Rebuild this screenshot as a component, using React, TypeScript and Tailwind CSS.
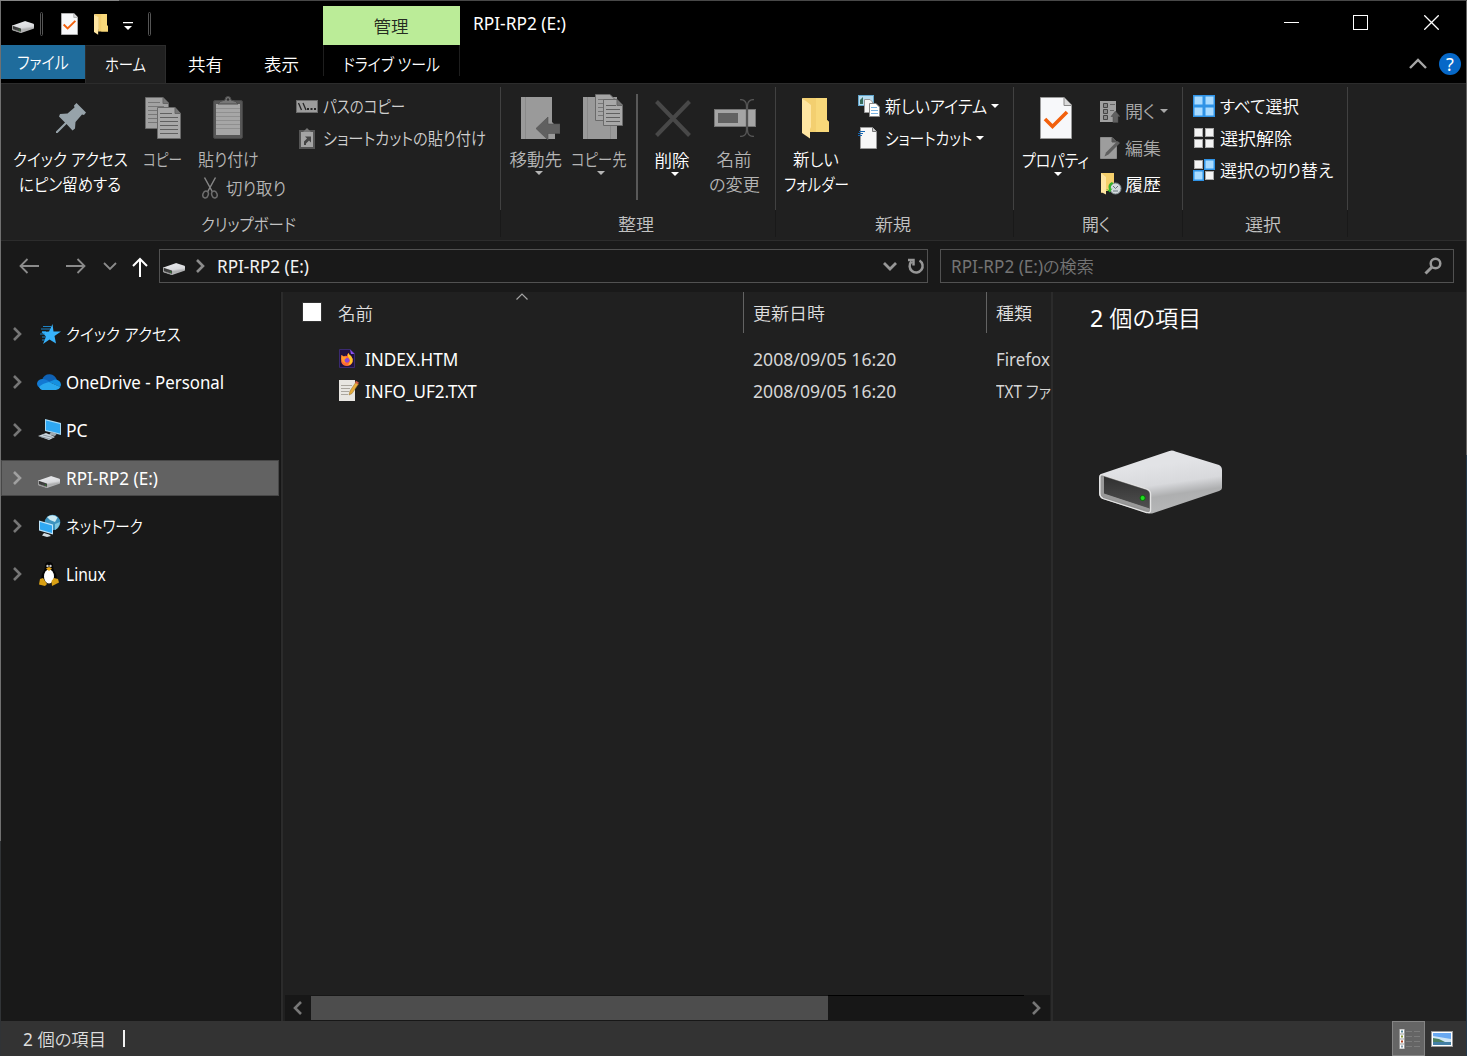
import React, { useLayoutEffect, useRef, useState } from "react";

/** One line of text, squeezed or stretched horizontally to a given width. */
function Fit({ w, children, className = "" }: { w: number; children: string; className?: string }) {
  const ref = useRef<HTMLSpanElement>(null);
  const [scale, setScale] = useState(1);
  useLayoutEffect(() => {
    if (ref.current) setScale(w / ref.current.offsetWidth);
  }, [w, children]);
  return (
    <span className={"block h-6 shrink-0 whitespace-nowrap leading-6 " + className} style={{ width: w }}>
      <span ref={ref} className="inline-block origin-left" style={{ transform: `scaleX(${scale})` }}>
        {children}
      </span>
    </span>
  );
}

function Drive({ id, className }: { id: string; className: string }) {
  return (
    <svg viewBox="0 0 124 64" className={"shrink-0 " + className} preserveAspectRatio="none">
      <defs>
        <linearGradient id={id} x1="0.4" y1="0.25" x2="0.58" y2="0.9">
          <stop offset="0" stopColor="#e2e3e6" />
          <stop offset="0.45" stopColor="#d8d9dc" />
          <stop offset="0.72" stopColor="#aeafb0" />
          <stop offset="1" stopColor="#b4b5b6" />
        </linearGradient>
        <linearGradient id={id + "f"} x1="0" y1="0" x2="0" y2="1">
          <stop offset="0" stopColor="#303030" />
          <stop offset="1" stopColor="#505050" />
        </linearGradient>
      </defs>
      <path d="M2 24 L71 1 Q74 0 77 1.500 L121 15 Q124 16.500 124 20 V38 Q124 40 121 41 L55 63 Q52 64 49 63 L4 49 Q0 47 0 43 V28 Q0 25 2 24Z" fill={"url(#" + id + ")"} />
      <path d="M1 27 Q1 24 4 25 L48 39 Q52 40.500 52 44 V60 Q52 63.500 48 62.500 L4 48.500 Q1 47 1 44Z" fill="#929292" stroke="#e4e4e4" strokeWidth="1.300" />
      <path d="M5 26.500 L48 40 Q51 41.500 51 44 V59 L5 44Z" fill={"url(#" + id + "f)"} />
      <path d="M2 28L5 27V43.500L51 58.500V61L4 47Q2 46 2 44Z" fill="#999" />
      <circle cx="44" cy="48" r="2.600" fill="#1fe01f" stroke="#0a6a0a" strokeWidth="1" />
    </svg>
  );
}

function CheckDoc({ className }: { className: string }) {
  return (
    <svg viewBox="0 0 32 42" className={"shrink-0 " + className} preserveAspectRatio="none">
      <path d="M0.500 0.500H24L31.500 8V41.500H0.500Z" fill="#f7f8fa" stroke="#9a9a9a" />
      <path d="M24 0.500V8.500H31.500" fill="#dadada" stroke="#888" />
      <path d="M5 22L12.500 29.500L27 15" fill="none" stroke="#f2600c" strokeWidth="3.600" />
    </svg>
  );
}

function Folder({ className }: { className: string }) {
  return (
    <svg viewBox="0 0 27 41" className={"shrink-0 " + className} preserveAspectRatio="none">
      <path d="M0 0H25V22L27 24V34H8V8Z" fill="#f3cf70" />
      <path d="M14 0H25V22L27 24V34H14Z" fill="#f8d87a" />
      <path d="M0 0L9 7V29L8 31V40.500L0 35Z" fill="#ffe6a2" />
    </svg>
  );
}

function PagePair({ className }: { className: string }) {
  return (
    <svg viewBox="0 0 36 42" className={"shrink-0 " + className}>
      <path d="M.5.5H18L23.500 6V31.500H.5Z" fill="#a2a2a2" stroke="#6a6a6a" />
      <path d="M18 .5V6.500H24" fill="#777" stroke="#666" />
      <path d="M3 5.500h12M3 9.500h16M3 13.500h10M3 17.500h9M3 21.500h9M3 25.500h9" stroke="#777" />
      <path d="M12.500 10.500H30L35.500 16.500V41.500H12.500Z" fill="#a8a8a8" stroke="#6a6a6a" />
      <path d="M30 10.500V16.500H36" fill="#777" stroke="#666" />
      <path d="M15 16.500h12M15 20.500h18M15 24.500h18M15 28.500h18M15 32.500h18M15 36.500h18" stroke="#606060" />
    </svg>
  );
}

function Caret({ className = "" }: { className?: string }) {
  return (
    <svg viewBox="0 0 8 4" className={"h-1 w-2 shrink-0 " + className}>
      <path d="M0 0H8L4 4Z" fill="currentColor" />
    </svg>
  );
}

function Clipboard({ className }: { className: string }) {
  return (
    <svg viewBox="0 0 30 43" className={"shrink-0 " + className}>
      <rect x="0.500" y="4.500" width="29" height="38" rx="1.500" fill="#565656" stroke="#444" />
      <rect x="3" y="8" width="24" height="31" fill="#a6a6a6" />
      <path d="M3 12.500h24M3 16.500h24M3 20.500h24M3 24.500h24M3 28.500h24M3 32.500h24" stroke="#8f8f8f" />
      <path d="M5 8Q6 5 12 4Q12 .5 15 .5T18 4Q24 5 25 8Z" fill="#777" stroke="#4c4c4c" />
      <circle cx="15" cy="3.500" r="1.300" fill="#333" />
    </svg>
  );
}

function Scissors() {
  return (
    <svg viewBox="0 0 16 22" className="h-[22px] w-4 shrink-0" fill="none" stroke="#6e6e6e" strokeWidth="1.500">
      <path d="M2.500 .5L10.500 15M13.500 .5L5.500 15" stroke="#858585" />
      <ellipse cx="3.600" cy="17.500" rx="2.600" ry="3.500" transform="rotate(20 3.600 17.500)" />
      <ellipse cx="12.400" cy="17.500" rx="2.600" ry="3.500" transform="rotate(-20 12.400 17.500)" />
    </svg>
  );
}

function Squares({ on }: { on: boolean[] }) {
  const at = [[1, 1], [12, 1], [1, 12], [12, 12]];
  return (
    <svg viewBox="0 0 22 22" className="size-[22px] shrink-0">
      {at.map(([x, y], i) =>
        on[i] ? (
          <rect key={i} x={x - 0.25} y={y - 0.25} width="9.500" height="9.500" fill="#a9dbff" stroke="#2f93e6" strokeWidth="1.500" />
        ) : (
          <rect key={i} x={x + 0.5} y={y + 0.5} width="8" height="8" fill="#f4f4f4" stroke="#aaa" />
        )
      )}
    </svg>
  );
}

function Chevron({ className = "" }: { className?: string }) {
  return (
    <svg viewBox="0 0 9 14" className={"h-[14px] w-[9px] shrink-0 " + className} fill="none" stroke="currentColor" strokeWidth="2.600">
      <path d="M1 1L7 7L1 13" />
    </svg>
  );
}

function Group({ label, labelWidth, className, children }: { label: string; labelWidth: number; className: string; children: React.ReactNode }) {
  return (
    <section className={"flex h-[156px] shrink-0 flex-col " + className}>
      <div className="flex flex-1">
        <div className="flex min-w-0 flex-1 flex-col">
          <div className="flex h-32 items-start">{children}</div>
          <div className="flex justify-center pr-1 text-[#c2c2c2]">
            <Fit w={labelWidth}>{label}</Fit>
          </div>
        </div>
        <div className="flex w-px flex-col pt-[3px]">
          <div className="h-[123px] bg-[#414141]" />
          <div className="h-[27px] bg-[#191919]" />
        </div>
      </div>
    </section>
  );
}

function TitleBar() {
  return (
    <header className="flex h-11 items-start bg-black">
      <Drive id="d1" className="ml-[11px] mt-5 h-3 w-[22px]" />
      <div className="ml-[6px] mt-[11px] h-6 w-[3px] rounded border border-[#555]" />
      <CheckDoc className="ml-[18px] mt-3 h-[22px] w-[17px]" />
      <Folder className="ml-4 mt-[13px] h-[21px] w-[14px]" />
      <svg viewBox="0 0 10 9" className="ml-[15px] mt-[21px] h-[9px] w-[10px] text-white">
        <path d="M0 0H10V1.200H0ZM1 4H9L5 8Z" fill="currentColor" />
      </svg>
      <div className="ml-[15px] mt-[11px] h-6 w-[3px] rounded border border-[#555]" />
      <div className="ml-[172px] mt-[5px] flex h-[39px] w-[137px] justify-center bg-[#bbec98] pr-px pt-2 text-[#252b21]">
        <Fit w={35}>管理</Fit>
      </div>
      <Fit w={93} className="ml-[13px] mt-[10px] text-white">RPI-RP2 (E:)</Fit>
      <div className="ml-auto mr-[27px] flex items-center gap-[54px] pt-[14px]">
        <div className="h-px w-[15px] bg-white" />
        <div className="size-[15px] border border-white" />
        <svg viewBox="0 0 15 15" className="ml-[2px] size-[15px]" stroke="#fff" strokeWidth="1.300">
          <path d="M.3.3L14.700 14.700M14.700.3L.3 14.700" />
        </svg>
      </div>
    </header>
  );
}

function Tabs() {
  return (
    <nav className="flex h-[38px] items-start bg-black text-white">
      <div className="flex h-[34px] w-[84px] justify-center bg-[#1f6c9c] pt-[5px]">
        <Fit w={52}>ファイル</Fit>
      </div>
      <div className="flex h-[39px] w-[81px] justify-center border-x border-t border-[#2c2c2c] bg-[#202020] pt-[6px]">
        <Fit w={41}>ホーム</Fit>
      </div>
      <Fit w={35} className="ml-[22px] mt-[7px]">共有</Fit>
      <Fit w={35} className="ml-[41px] mt-[7px]">表示</Fit>
      <div className="ml-[24px] flex h-[31px] w-[137px] justify-center border-x border-[#1e1e1e] pt-[7px]">
        <Fit w={97}>ドライブ ツール</Fit>
      </div>
      <svg viewBox="0 0 18 11" className="ml-auto mt-[13px] h-[11px] w-[18px]" fill="none" stroke="#a6a6a6" strokeWidth="2.400">
        <path d="M1 10L9 2L17 10" />
      </svg>
      <div className="ml-[12px] mr-[5px] mt-2 flex size-[22px] items-center justify-center rounded-full bg-[#0668c8] text-[18px] leading-none text-white">?</div>
    </nav>
  );
}

function Ribbon() {
  return (
    <div className="flex h-[158px] border-y border-[#2c2c2c] bg-[#202020] text-[#b5b5b5]">
      <Group label="クリップボード" labelWidth={95} className="w-[500px]">
        <div className="ml-[11px] flex w-[117px] flex-col items-center pt-[19px] text-white">
          <svg viewBox="0 0 30 30" className="size-[30px]">
            <path d="M20.500 0L30 9.500L28 12L26 11.500L19.500 19L19 25.500L16.500 27.500L10.500 21L1.500 30L0 30V28.500L9 19.500L3 13.500L4 11L11.500 10.500L18.500 4.500L18 2.500Z" fill="#97a3aa" />
          </svg>
          <Fit w={115} className="mt-[14px]">クイック アクセス</Fit>
          <Fit w={102} className="-ml-px mt-px">にピン留めする</Fit>
        </div>
        <div className="ml-[13px] flex w-[42px] flex-col items-center pt-[13px]">
          <PagePair className="h-[42px] w-9" />
          <Fit w={39} className="-ml-px mt-2">コピー</Fit>
        </div>
        <div className="ml-[13px] flex w-[90px] flex-col pt-3">
          <Clipboard className="ml-[16px] h-[43px] w-[30px]" />
          <Fit w={61} className="ml-px mt-2">貼り付け</Fit>
          <div className="mt-[2px] ml-[5px] flex h-[30px] items-center">
            <Scissors />
            <Fit w={60} className="-mt-px ml-[8px]">切り取り</Fit>
          </div>
        </div>
        <div className="ml-[9px] flex flex-col gap-2 pt-[10px] text-[#cfcfcf]">
          <div className="flex items-center">
            <svg viewBox="0 0 22 13" className="mr-[5px] h-[13px] w-[22px]">
              <rect x=".5" y=".5" width="21" height="12" fill="#9c9c9c" stroke="#6b6b6b" />
              <path d="M2.500 3L5.500 10M7 3L10 10" stroke="#252525" strokeWidth="1.300" />
              <path d="M11 9h2M14.500 9h2M18 9h2" stroke="#252525" strokeWidth="2" />
            </svg>
            <Fit w={82}>パスのコピー</Fit>
          </div>
          <div className="flex items-center">
            <svg viewBox="0 0 16 21" className="ml-[3px] mr-[8px] h-[21px] w-4">
              <rect x="1" y="3" width="14" height="17" fill="#a4a4a4" stroke="#555" strokeWidth="2" />
              <path d="M4 4L8 0L12 4Z" fill="#777" />
              <path d="M5 17V13.500L8 10.500L6 8.500H12V14.500L10 12.500L7 15.500V17Z" fill="#444" />
            </svg>
            <Fit w={163}>ショートカットの貼り付け</Fit>
          </div>
        </div>
      </Group>

      <Group label="整理" labelWidth={36} className="w-[275px]">
        <div className="ml-2 flex w-[55px] flex-col items-center pt-[13px]">
          <svg viewBox="0 0 39 43" className="ml-[7px] h-[43px] w-[39px]">
            <path d="M0 0H31V25L34 28V42H0Z" fill="#9a9a9a" />
            <path d="M4.500 0V42" stroke="#8a8a8a" />
            <path d="M15 31.500L27 20V27H39V36.500H27V43Z" fill="#606060" stroke="#505050" strokeWidth=".6" />
          </svg>
          <Fit w={53} className="-ml-px mt-[7px]">移動先</Fit>
          <Caret className="ml-[4px]" />
        </div>
        <div className="ml-[6px] flex w-[57px] flex-col items-center pt-[10px]">
          <svg viewBox="0 0 40 45" className="ml-[9px] h-[45px] w-10">
            <path d="M0 3H34V45H0Z" fill="#9a9a9a" />
            <path d="M4.500 3V45M27.500 30V45" stroke="#8a8a8a" />
            <path d="M12.500.5H27L32 5.500V26.500H12.500Z" fill="#a5a5a5" stroke="#6a6a6a" />
            <path d="M15 5.500h10M15 9.500h6M15 13.500h6M15 17.500h6M15 21.500h6" stroke="#777" />
            <path d="M20.500 5.500H34L39.500 11V31.500H20.500Z" fill="#a8a8a8" stroke="#6a6a6a" />
            <path d="M23 11.500h10M23 15.500h14M23 19.500h14M23 23.500h14M23 27.500h14" stroke="#606060" />
            <path d="M34 5.500V11.500H39.500" fill="#777" stroke="#666" />
          </svg>
          <Fit w={56} className="mt-2">コピー先</Fit>
          <Caret className="ml-[5px]" />
        </div>
        <div className="ml-[9px] mt-[10px] h-[106px] w-[2px] bg-[#595959]" />
        <div className="ml-[17px] flex w-9 flex-col items-center pt-4">
          <svg viewBox="0 0 36 37" className="h-[37px] w-9" stroke="#484848" strokeWidth="4">
            <path d="M1.500 1.500L34.500 35.500M34.500 1.500L1.500 35.500" />
          </svg>
          <Fit w={35} className="-ml-[2px] mt-[11px] text-white">削除</Fit>
          <Caret className="ml-[3px] text-white" />
        </div>
        <div className="ml-4 flex w-[54px] flex-col items-center pt-[15px]">
          <svg viewBox="0 0 42 38" className="ml-px h-[38px] w-[42px]">
            <rect x=".5" y="10.500" width="41" height="17" fill="#a5a5a5" stroke="#757575" />
            <rect x="4" y="14" width="20" height="10" fill="#626262" />
            <path d="M26 .5Q32.500 .5 32.500 7V31Q32.500 37.500 26 37.500M40 .5Q33.500 .5 33.500 7V31Q33.500 37.500 40 37.500" fill="none" stroke="#555" strokeWidth="1.300" />
          </svg>
          <Fit w={35} className="mt-[10px]">名前</Fit>
          <Fit w={51} className="mt-px">の変更</Fit>
        </div>
      </Group>

      <Group label="新規" labelWidth={36} className="w-[238px] text-white">
        <div className="ml-2 flex w-[66px] flex-col items-center pt-[14px]">
          <Folder className="-ml-[4px] h-[41px] w-[27px]" />
          <Fit w={46} className="-ml-[2px] mt-2">新しい</Fit>
          <Fit w={65} className="-ml-px mt-px">フォルダー</Fit>
        </div>
        <div className="ml-2 flex flex-col gap-2 pt-[10px]">
          <div className="flex items-center">
            <svg viewBox="0 0 22 22" className="mr-[5px] size-[22px]">
              <rect x=".5" y=".5" width="15" height="10" fill="#b6dcf0" stroke="#62a6cd" />
              <path d="M2 9V5L5 2V9Z" fill="#376c5c" />
              <path d="M6.500 4.500H12L14.500 7V17.500H6.500Z" fill="#f6f6f6" stroke="#999" />
              <path d="M11.500 8.500H18L21.500 12V21.500H11.500Z" fill="#fff" stroke="#888" />
              <path d="M13 12.500h6M13 15.500h7M13 18.500h7" stroke="#79b2e0" />
            </svg>
            <Fit w={102}>新しいアイテム</Fit>
            <Caret className="-mt-px ml-1" />
          </div>
          <div className="flex items-center">
            <svg viewBox="0 0 22 22" className="mr-[5px] size-[22px]">
              <path d="M2.500 .5H14.500L18.500 4.500V21.500H2.500Z" fill="#f7f7f7" stroke="#999" />
              <path d="M14.500 .5V4.500H18.500" fill="#ccc" stroke="#777" />
              <path d="M1 4.500h6M0 6.500h5M0 8.500h4" stroke="#1867b2" />
            </svg>
            <Fit w={87}>ショートカット</Fit>
            <Caret className="-mt-px ml-1" />
          </div>
        </div>
      </Group>

      <Group label="開く" labelWidth={29} className="w-[169px] text-white">
        <div className="ml-2 flex w-[68px] flex-col items-center pt-[13px]">
          <CheckDoc className="h-[42px] w-8" />
          <Fit w={67} className="-ml-px mt-[9px]">プロパティ</Fit>
          <Caret className="ml-[3px]" />
        </div>
        <div className="ml-[10px] flex flex-col gap-[13px] pt-[15px]">
          <div className="flex items-center text-[#a8a8a8]">
            <svg viewBox="0 0 20 23" className="mr-[5px] h-[23px] w-5">
              <path d="M0 1H16V22H0Z" fill="#a0a0a0" />
              <path d="M3.500 3.500h4v4h-4zM3.500 9.500h4v4h-4zM3.500 15.500h4v4h-4z" fill="#888" stroke="#454545" />
              <path d="M10 4.500h5M10 10.500h4" stroke="#666" />
              <path d="M15.500 11L20 16.500H18V22.500H13V16.500H11Z" fill="#606060" stroke="#4a4a4a" strokeWidth=".5" />
            </svg>
            <Fit w={31}>開く</Fit>
            <Caret className="-mt-px ml-[4px]" />
          </div>
          <div className="flex items-center text-[#a8a8a8]">
            <svg viewBox="0 0 20 22" className="mr-[5px] h-[22px] w-5">
              <path d="M.5 .5H12L16.500 5V21.500H.5Z" fill="#9d9d9d" stroke="#8b8b8b" />
              <path d="M12 .5V5H16.500" fill="#555" stroke="#555" />
              <path d="M4.500 19.500L6 15.500L17.500 4L20 6L8.500 17.500Z" fill="#5f5f5f" />
            </svg>
            <Fit w={36}>編集</Fit>
          </div>
          <div className="-mt-px flex items-center">
            <svg viewBox="0 0 21 22" className="ml-px mr-[3px] h-[22px] w-[21px]">
              <path d="M0 0H13V18H4L0 20Z" fill="#f6d06c" />
              <path d="M0 0L5 4V21.500L0 19Z" fill="#ffe6a2" />
              <circle cx="14.500" cy="15.500" r="5.500" fill="#d3dadd" stroke="#7f8a8f" />
              <path d="M12 13l2.500 2.500L17 13M12 18h5" stroke="#66747a" fill="none" />
              <path d="M11 9Q6 11 8 17L5 16L9 19.500L11.500 15L10 16Q9 12 12.500 10.500Z" fill="#36b52c" />
            </svg>
            <Fit w={36}>履歴</Fit>
          </div>
        </div>
      </Group>

      <Group label="選択" labelWidth={36} className="w-[165px] text-white">
        <div className="ml-[10px] flex flex-col gap-2 pt-[10px]">
          <div className="flex items-center gap-[5px]"><Squares on={[true, true, true, true]} /><Fit w={79}>すべて選択</Fit></div>
          <div className="flex items-center gap-[5px]"><Squares on={[false, false, false, false]} /><Fit w={72}>選択解除</Fit></div>
          <div className="flex items-center gap-[5px]"><Squares on={[false, true, true, false]} /><Fit w={113}>選択の切り替え</Fit></div>
        </div>
      </Group>
    </div>
  );
}

function AddressBar() {
  return (
    <div className="flex h-[51px] items-start bg-[#191919] pt-2">
      <div className="flex h-[34px] w-[158px] items-center">
        <svg viewBox="0 0 20 16" className="ml-[18px] h-4 w-5 shrink-0" fill="none" stroke="#8b8b8b" strokeWidth="1.800">
          <path d="M20 8H1.500M8.500 1L1.500 8L8.500 15" />
        </svg>
        <svg viewBox="0 0 20 16" className="ml-[27px] h-4 w-5 shrink-0" fill="none" stroke="#8b8b8b" strokeWidth="1.800">
          <path d="M0 8H18.500M11.500 1L18.500 8L11.500 15" />
        </svg>
        <svg viewBox="0 0 14 9" className="ml-[17px] h-[9px] w-[14px] shrink-0" fill="none" stroke="#8b8b8b" strokeWidth="1.800">
          <path d="M1 1L7 7L13 1" />
        </svg>
        <svg viewBox="0 0 16 20" className="ml-[15px] mt-[2px] h-5 w-4 shrink-0" fill="none" stroke="#fff" strokeWidth="2">
          <path d="M8 20V2M1 9L8 2L15 9" />
        </svg>
      </div>
      <div className="flex h-[34px] w-[769px] items-center border border-[#515151]">
        <Drive id="d2" className="ml-[3px] mt-[5px] h-3 w-[22px]" />
        <Chevron className="ml-[11px] h-[11px] w-[8px] text-[#8c8c8c]" />
        <Fit w={92} className="ml-3 text-[#f3f3f3]">RPI-RP2 (E:)</Fit>
        <svg viewBox="0 0 14 9" className="ml-auto mt-px h-[9px] w-[14px]" fill="none" stroke="#979797" strokeWidth="2.800">
          <path d="M1 1L7 7L13 1" />
        </svg>
        <svg viewBox="0 0 18 18" className="ml-[10px] mr-[2px] size-[18px]" fill="none" stroke="#979797" strokeWidth="2.500">
          <path d="M12.500 3.500A6.500 6.500 0 1 1 4.500 4.500M1 3H6.500V8.500" />
        </svg>
      </div>
      <div className="ml-3 flex h-[34px] w-[514px] items-center border border-[#515151]">
        <Fit w={143} className="ml-[10px] text-[#747474]">RPI-RP2 (E:)の検索</Fit>
        <svg viewBox="0 0 18 18" className="ml-auto mr-[11px] size-[18px]" fill="none" stroke="#999" strokeWidth="2.500">
          <circle cx="11.500" cy="6.500" r="4.800" />
          <path d="M8 10L1.500 16.500" strokeWidth="3" />
        </svg>
      </div>
    </div>
  );
}

function StarIcon() {
  return (
    <svg viewBox="0 0 24 24" className="size-6 shrink-0">
      <path d="M15.500 2L16.500 9.500H24L17.500 14L19 21.500L12.500 17.500L6 22L9 14.500L4.500 10L12 9.500Z" fill="#37b2fb" />
      <path d="M6 4.500H14M4 7H13M5 9.500H9M3 12H8M5 15H9M5 18H8" stroke="#1d82c4" strokeWidth="1" />
    </svg>
  );
}
function CloudIcon() {
  return (
    <svg viewBox="0 0 24 16" className="h-4 w-6 shrink-0">
      <path d="M5 6Q7 0 13 .3Q18 .8 20 6L12 10Z" fill="#0f62b5" />
      <path d="M4 14Q0 13 0 9.500Q.5 5.500 5 5Q8 4.500 13 8L8 13Z" fill="#1279d2" />
      <path d="M12 8L18 5.500Q23.500 6 24 10.500Q24 12 23 13Z" fill="#1590df" />
      <path d="M2 13Q5 9.500 12 8L23.500 13Q22 15.800 19 16H5Q3 15.500 2 13Z" fill="#29a8ee" />
    </svg>
  );
}
function PcIcon() {
  return (
    <svg viewBox="0 0 24 22" className="h-[22px] w-6 shrink-0">
      <path d="M8 0L24 4V16L8 12Z" fill="#a6d9f5" />
      <path d="M9 1.500L23 5V14.500L9 11Z" fill="#2fa8f3" />
      <path d="M14 13L20 14.500L18 17L12 16Z" fill="#9eabb3" />
      <path d="M1 17L9 14L18 18L12 21Z" fill="#ccd7de" />
      <path d="M3 17.500L13 20M6 16L16 18.500" stroke="#7f8c95" strokeWidth=".8" />
    </svg>
  );
}
function NetworkIcon() {
  return (
    <svg viewBox="0 0 24 24" className="size-6 shrink-0">
      <circle cx="15.500" cy="8.500" r="7.800" fill="#3c93bf" />
      <path d="M10 3Q16 -.5 20.500 3.500L18 8L13 6Z" fill="#cdebf4" />
      <path d="M18 10L23 8Q22 14 18 16Z" fill="#7fc6df" />
      <path d="M2 6.500L16 10.500V20.500L2 16.500Z" fill="#bde4fa" />
      <path d="M3 8L15 11.500V19L3 15.500Z" fill="#2fa8f3" />
      <path d="M7 19L12 20.500L14 22L10 23L5 21.500Z" fill="#d3dce1" />
    </svg>
  );
}
function TuxIcon() {
  return (
    <svg viewBox="0 0 20 24" className="mx-[2px] h-6 w-5 shrink-0">
      <path d="M6 4Q6 0 10 0T14 4Q14 8 17 12Q19 17 16 21H4Q1 17 3 12Q6 8 6 4Z" fill="#050505" />
      <ellipse cx="10" cy="14.500" rx="5" ry="7" fill="#fff" />
      <circle cx="8.500" cy="4" r="1.200" fill="#ccc" /><circle cx="11.500" cy="4" r="1.200" fill="#ccc" />
      <path d="M7 6.500L10 5L13 6.500L10 9Z" fill="#e8a718" />
      <path d="M1 17L4 16L8 22L6 24L0 22.500ZM19 17L15 16L12.500 19L13 24L20 20.500Z" fill="#d9a014" />
    </svg>
  );
}

function Sidebar() {
  const items = [
    { label: "クイック アクセス", w: 115, icon: <StarIcon /> },
    { label: "OneDrive - Personal", w: 158, icon: <CloudIcon /> },
    { label: "PC", w: 22, icon: <PcIcon /> },
    { label: "RPI-RP2 (E:)", w: 92, icon: <Drive id="d3" className="ml-px mr-px mt-[8px] h-3 w-[22px]" />, selected: true },
    { label: "ネットワーク", w: 77, icon: <NetworkIcon /> },
    { label: "Linux", w: 40, icon: <TuxIcon /> },
  ];
  return (
    <aside className="flex w-[280px] shrink-0 flex-col gap-3 border-r border-[#161616] bg-[#191919] pt-6 text-white">
      {items.map((it) => (
        <div
          key={it.label}
          className={
            it.selected
              ? "flex h-9 w-[278px] items-center border border-[#474747] bg-[#626262] pl-[11px] text-[#a0a0a0]"
              : "flex h-9 w-[278px] items-center pl-[12px] text-[#767676]"
          }
        >
          <Chevron />
          <div className="ml-[15px] flex items-center">{it.icon}</div>
          <Fit w={it.w} className="ml-[5px] text-white">{it.label}</Fit>
        </div>
      ))}
    </aside>
  );
}

function FirefoxFile() {
  return (
    <svg viewBox="0 0 20 20" className="ml-px size-5 shrink-0 -mt-px">
      <path d="M.5 .5H11L15.500 4.500V18.500H.5Z" fill="#21123f" stroke="#3a2a70" />
      <path d="M11 .5L15.500 5H12Z" fill="#8a4ff0" />
      <path d="M2.500 6L4.500 7.500Q6 6.500 8 7Q8 5 9.500 4Q10 6 12 7Q14.500 10 13.500 13Q12 17 8 17Q3.500 17 2.200 13Q1.800 9 2.500 6Z" fill="#ff6a36" />
      <path d="M9.500 4Q10 6 12 7Q14.500 10 13.500 13Q12 16 9 16Q12.500 12.500 10 9Q8 7 9.500 4Z" fill="#ffc928" />
      <circle cx="8" cy="11.300" r="2.400" fill="#8b46d8" />
      <path d="M2.500 6L4.500 7.500L8 8.500L5.500 10.500Q5 13 7.500 14Q3 14 2.400 10Z" fill="#ff9a2a" />
    </svg>
  );
}
function TextFile() {
  return (
    <svg viewBox="0 0 20 21" className="-mt-px ml-px h-[21px] w-5 shrink-0">
      <path d="M0 0H16V21H0Z" fill="#e8e6e2" />
      <path d="M2 5.500h11M2 8.500h9M2 11.500h8M2 14.500h7" stroke="#aaa69f" />
      <path d="M10 15L11 11L17 2L19.500 4L13 13.500Z" fill="#e7ad3c" stroke="#8a6a2c" strokeWidth=".5" />
      <path d="M16 2.500L17 .8L19.800 2.500L18.800 4.500Z" fill="#cf5b45" />
    </svg>
  );
}

function FileList() {
  const files = [
    { icon: <FirefoxFile />, name: "INDEX.HTM", w: 93, type: "Firefox", tw: 54 },
    { icon: <TextFile />, name: "INFO_UF2.TXT", w: 112, type: "TXT ファ", tw: 55 },
  ];
  return (
    <main className="flex w-[768px] shrink-0 flex-col bg-[#202020] text-[#dedede]">
      <div className="flex h-[41px] shrink-0">
        <div className="flex w-[460px] shrink-0">
          <div className="ml-[19px] mt-[10px] size-5 border border-[#333] bg-white" />
          <Fit w={35} className="ml-[16px] mt-[9px]">名前</Fit>
          <svg viewBox="0 0 12 7" className="ml-[143px] mt-[1px] h-[7px] w-3" fill="none" stroke="#a5a5a5" strokeWidth="1.200">
            <path d="M.5 6.500L6 1L11.500 6.500" />
          </svg>
        </div>
        <div className="w-[243px] shrink-0 border-l border-[#636363] pl-[9px] pt-[9px]"><Fit w={72}>更新日時</Fit></div>
        <div className="flex-1 border-l border-[#636363] pl-[9px] pt-[9px]"><Fit w={36}>種類</Fit></div>
      </div>
      <div className="mt-[10px] flex flex-1 flex-col">
        {files.map((f) => (
          <div key={f.name} className="flex h-8 items-center">
            <div className="ml-[55px] flex w-[415px] shrink-0 items-center text-white">
              {f.icon}
              <Fit w={f.w} className="ml-[6px]">{f.name}</Fit>
            </div>
            <div className="w-[243px] shrink-0 text-[#d6d6d6]"><Fit w={143}>2008/09/05 16:20</Fit></div>
            <div className="w-[55px] text-[#d6d6d6]"><Fit w={f.tw}>{f.type}</Fit></div>
          </div>
        ))}
      </div>
      <div className="ml-[2px] mr-px flex h-[26px] items-center bg-[#171717] text-[#777]">
        <Chevron className="ml-2 h-3 w-[9px] rotate-180" />
        <div className="ml-[9px] h-6 w-[517px] bg-[#4d4d4d]" />
        <div className="h-[26px] w-[196px] border-t border-black" />
        <Chevron className="ml-2 h-3 w-[9px]" />
      </div>
    </main>
  );
}

function StatusBar() {
  return (
    <footer className="flex h-[35px] items-center bg-[#333] text-[#dedede]">
      <Fit w={83} className="ml-[22px]">2 個の項目</Fit>
      <div className="ml-[17px] h-[17px] w-[2px] bg-[#f2f2f2]" />
      <div className="ml-auto flex h-[35px] w-[33px] items-center justify-center border border-[#858585] bg-[#656565]">
        <svg viewBox="0 0 22 22" className="size-[22px]">
          {[["#54899c", 1], ["#879735", 6], ["#b64220", 11], ["#8298a8", 16]].map(([c, y]) => (
            <g key={y}>
              <rect x="1" y={y} width="6" height="5" fill="#999" />
              <rect x="2" y={Number(y) + 0.5} width="4" height="4" fill="#fff" />
              <rect x="3" y={Number(y) + 1.5} width="2" height="2" fill={String(c)} />
              <path d={`M8 ${Number(y) + 2.5}h6M16 ${Number(y) + 2.5}h6`} stroke="#7c7c7c" />
            </g>
          ))}
        </svg>
      </div>
      <svg viewBox="0 0 22 16" className="ml-[6px] mr-[13px] h-4 w-[22px]">
        <rect width="22" height="16" fill="#9b9b9b" />
        <rect x="1" y="1" width="20" height="14" fill="#fff" />
        <rect x="2" y="2" width="18" height="12" fill="#68a8f1" />
        <path d="M2 5L8 6L20 8V11H2Z" fill="#cde5f6" />
        <path d="M2 7L8 8L14 11H2Z" fill="#4b8062" />
        <path d="M2 11H20V14H2Z" fill="#437fa5" />
      </svg>
    </footer>
  );
}

export default function App() {
  return (
    <div className="flex h-[1056px] w-[1467px] flex-col overflow-hidden bg-[#191919] font-['Noto_Sans','Noto_Sans_CJK_JP_DemiLight','Noto_Sans_CJK_JP_Light','Noto_Sans_CJK_JP',sans-serif] text-[17.5px] [font-feature-settings:'palt']">
      <div className="flex h-px shrink-0">
        <div className="w-[119px] bg-[#858585]" />
        <div className="flex-1 bg-[#484848]" />
      </div>
      <div className="flex flex-1">
        <div className="flex w-px shrink-0 flex-col">
          <div className="h-[840px] bg-[#707070]" />
          <div className="flex-1 bg-[#303336]" />
        </div>
        <div className="flex w-[1465px] shrink-0 flex-col">
          <TitleBar />
          <Tabs />
          <Ribbon />
          <AddressBar />
          <div className="flex h-[729px]">
            <Sidebar />
            <div className="w-[2px] shrink-0 bg-[#2b2b2b]" />
            <FileList />
            <div className="w-[2px] shrink-0 bg-[#2b2b2b]" />
            <aside className="flex-1 bg-[#202020] pl-[37px] pt-[14px] text-white">
              <Fit w={111} className="text-[23px]">2 個の項目</Fit>
              <Drive id="d4" className="ml-[9px] mt-[120px] h-16 w-[123px]" />
            </aside>
          </div>
          <StatusBar />
        </div>
        <div className="flex w-px shrink-0 flex-col">
          <div className="h-[454px] bg-[#666]" />
          <div className="flex-1 bg-[#24384a]" />
        </div>
      </div>
    </div>
  );
}
